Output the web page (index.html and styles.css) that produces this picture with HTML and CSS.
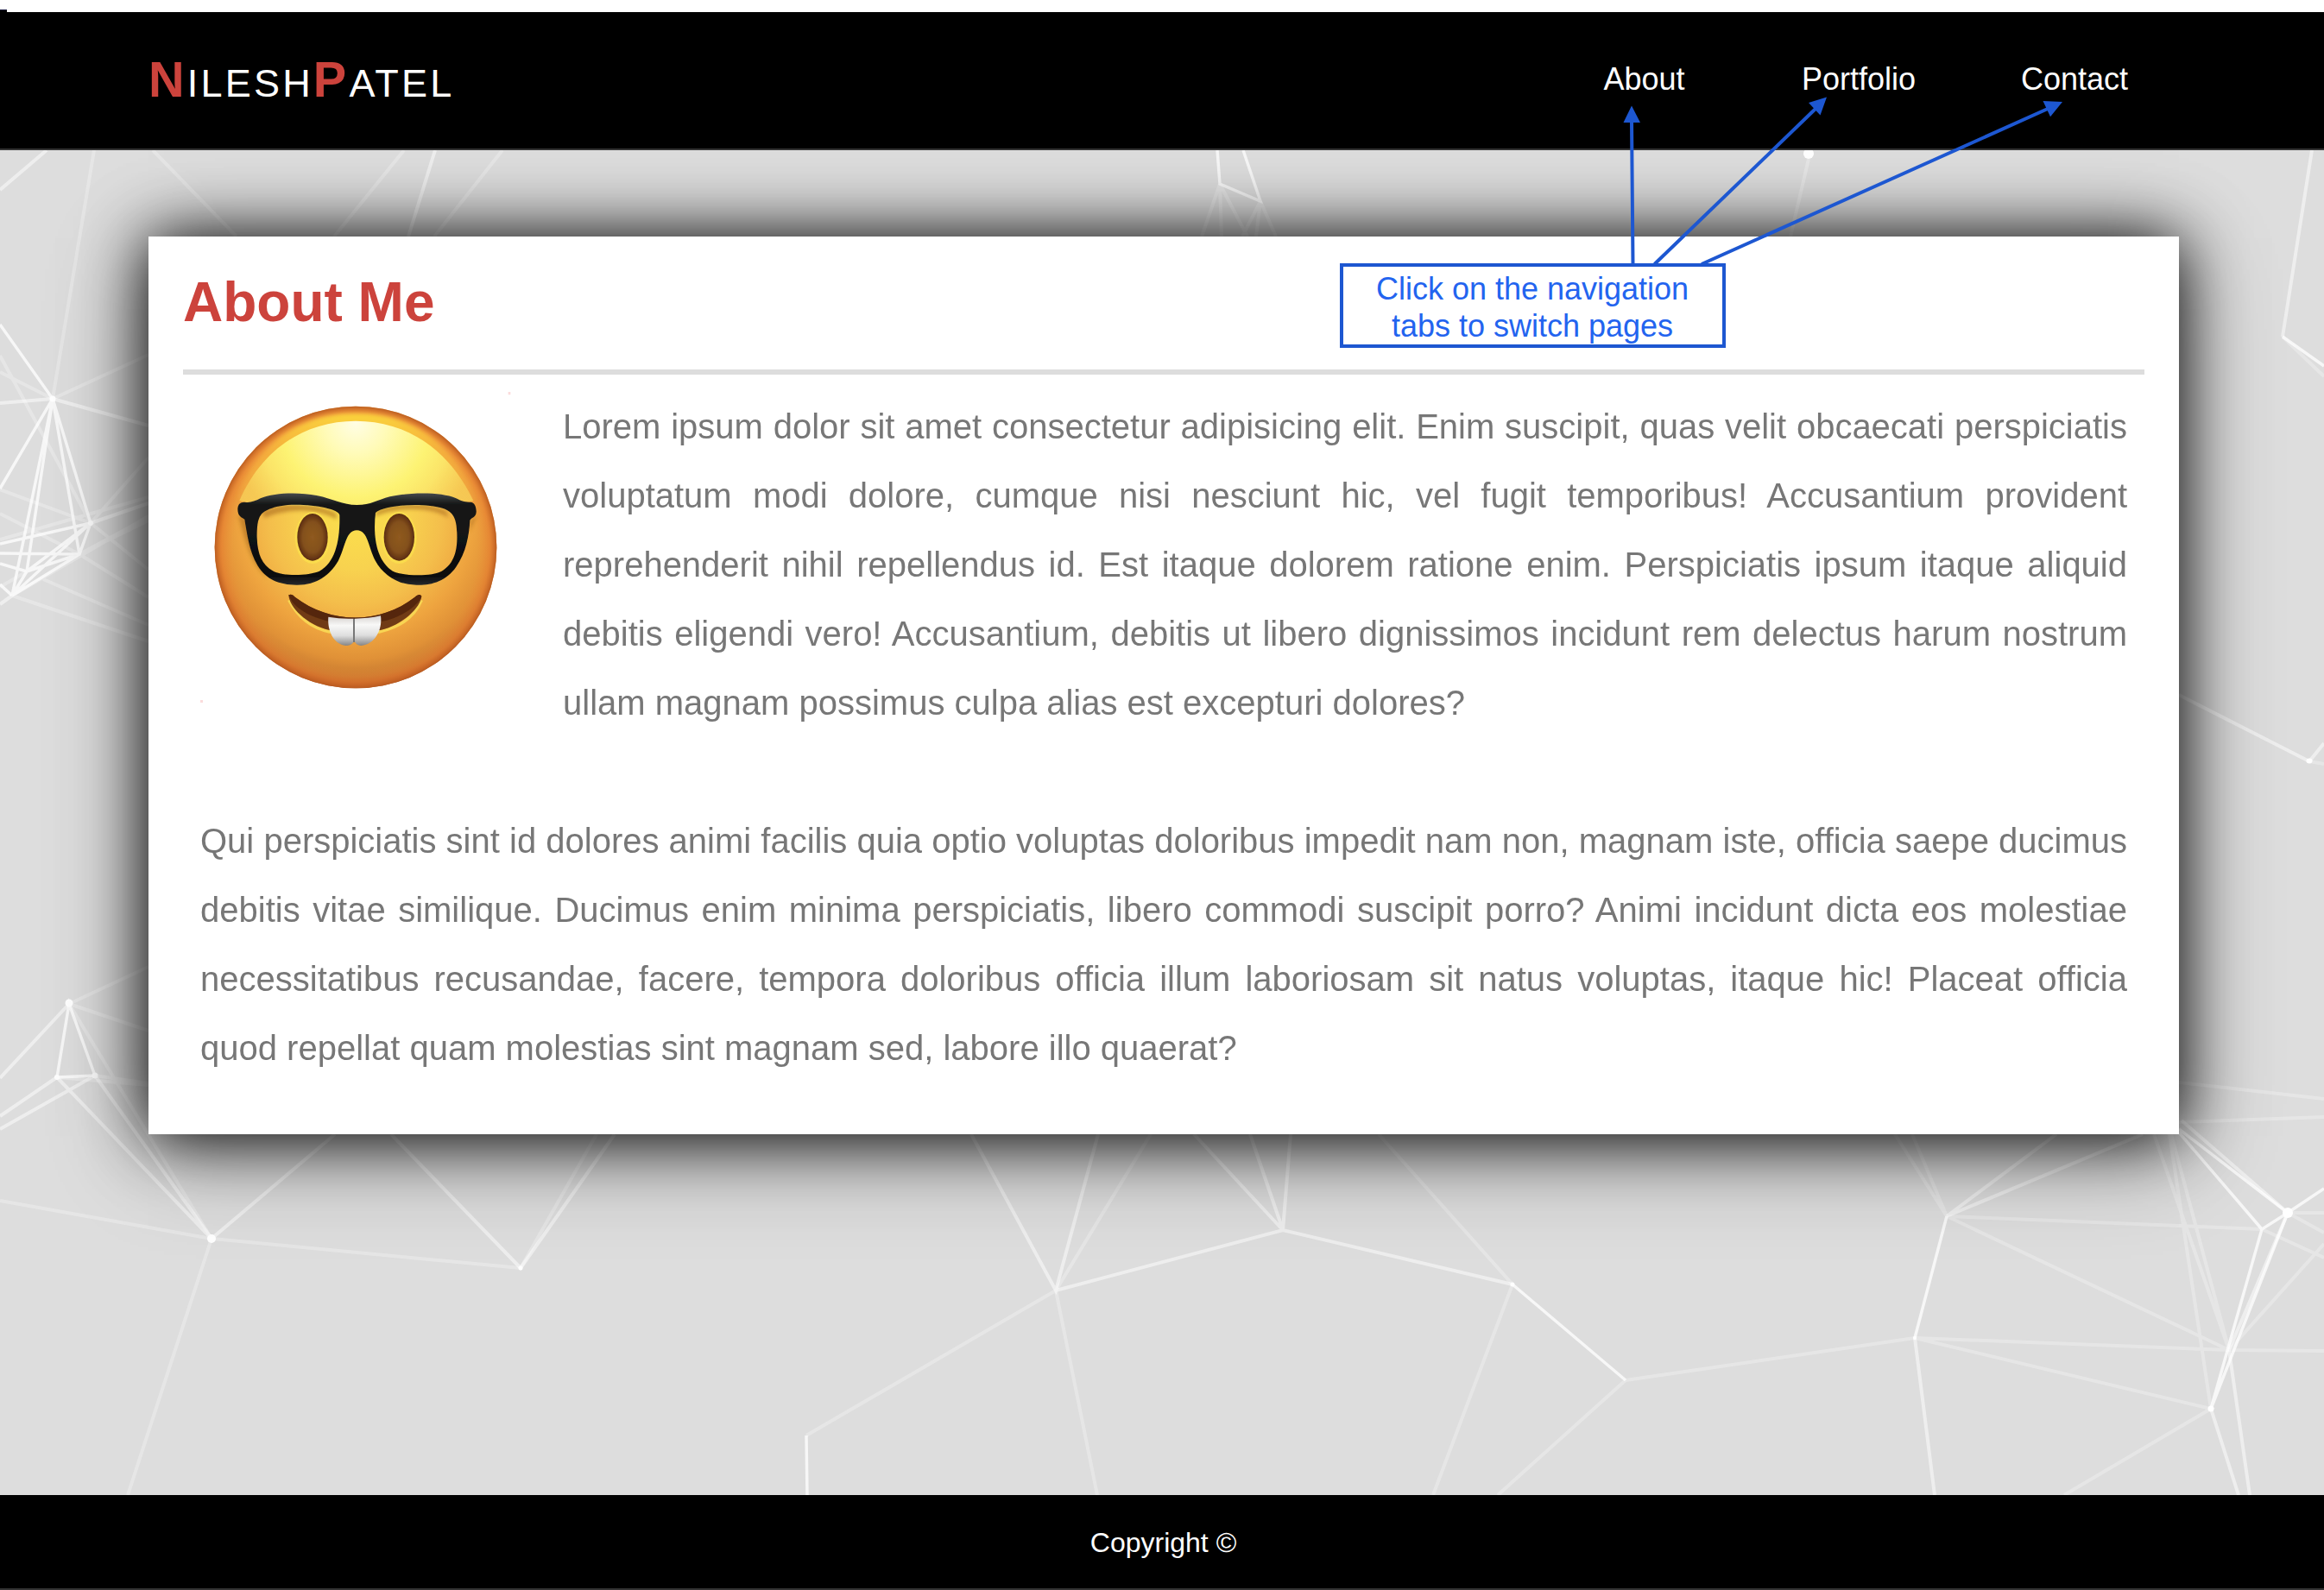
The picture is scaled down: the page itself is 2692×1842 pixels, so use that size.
FILE: index.html
```html
<!DOCTYPE html>
<html lang="en">
<head>
<meta charset="utf-8">
<title>Nilesh Patel</title>
<link rel="stylesheet" href="styles.css">
</head>
<body>
<span class="corner"></span>
<header class="header">
  <a class="logo"><span class="cap">N</span>ilesh<span class="cap">P</span>atel</a>
  <nav class="nav">
    <a>About</a>
    <a>Portfolio</a>
    <a>Contact</a>
  </nav>
</header>

<main class="main">
  <svg class="net" viewBox="0 174 2692 1558" preserveAspectRatio="none" fill="none" stroke="#fff" stroke-width="4">
    <g stroke-opacity=".28">
      <path d="M61 462L109 174M177 174L274 274M61 462L0 431M0 412L105 606M61 462L172 411M0 567L105 606L172 660M0 595L92 642L172 692M50 671L172 724M14 690L172 743M0 625L172 576M105 606L172 530M92 642L172 599M92 642L172 603M14 690L172 598M0 680L31 662"/>
      <path d="M468 174L387 274M582 174L503 274M1413 213L1392 274M1413 213L1415 274M1413 213L1445 274M1460 233L1439 274M1460 233L1455 274M1460 233L1478 274M2095 184L2074 274"/>
      <path d="M2644 390L2692 436M2675 882L2692 885M2524 1254L2692 1273M2524 1300L2692 1294"/>
      <path d="M80 1163L172 1120M80 1163L172 1194M110 1246L172 1255M66 1248L172 1257M0 1391L245 1435L603 1469M245 1435L148 1732M80 1163L245 1435M603 1469L691 1314"/>
      <path d="M1223 1495L1333 1314M1223 1495L934 1663M1223 1495L1271 1732M1597 1314L1752 1488L1660 1732M1883 1599L1735 1732M1883 1599L2218 1550"/>
      <path d="M2255 1409L2195 1314M2255 1409L2215 1314M2255 1409L2620 1424M2255 1409L2582 1564M2218 1550L2582 1564L2692 1565M2218 1550L2561 1632L2391 1732M2650 1405L2692 1405M2650 1405L2692 1428M2620 1424L2692 1457M2582 1564L2692 1441M2561 1632L2513 1314M2582 1564L2495 1314M2582 1564L2515 1314"/>
    </g>
    <g stroke-opacity=".5">
      <path d="M0 220L54 174M61 462L0 467M61 462L172 493M105 606L172 583M0 700L14 690M504 174L473 274M2678 174L2644 390M2675 882L2692 861M2524 805L2675 882"/>
      <path d="M0 1249L80 1163M66 1248L245 1435L388 1314M110 1246L245 1435M66 1248L0 1293M110 1246L0 1308M453 1314L603 1469L712 1314"/>
      <path d="M1125 1314L1223 1495L1272 1314M1223 1495L1486 1425L1752 1488M1486 1425L1383 1314M1486 1425L1448 1314M1486 1425L1495 1314"/>
      <path d="M2255 1409L2382 1314M2255 1409L2482 1314M2218 1550L2241 1732M2582 1564L2606 1732M2561 1632L2593 1732M2582 1564L2650 1405L2527 1298"/>
    </g>
    <g stroke-opacity=".75" stroke-width="3.5">
      <path d="M0 376L61 462L0 566M61 462L31 662M61 462L14 690M61 462L92 642M61 462L105 606M0 630L105 606M0 641L92 642M0 653L31 662M0 677L14 690M14 690L105 606M14 690L92 642M31 662L105 606M31 662L92 642L105 606M31 662L14 690"/>
      <path d="M1410 174L1413 213L1460 233L1440 174M2644 390L2692 424M66 1248L80 1163L110 1246L66 1248M934 1663L935 1732M1752 1488L1883 1599M2218 1550L2255 1409"/>
      <path d="M2561 1632L2620 1424L2650 1405L2692 1377M2561 1632L2650 1405L2524 1308M2620 1424L2524 1312"/>
    </g>
    <g fill="#fff" stroke="none">
      <circle cx="2095" cy="178" r="6"/><circle cx="61" cy="462" r="3.5"/><circle cx="105" cy="606" r="3"/>
      <circle cx="80" cy="1162" r="4.5"/><circle cx="66" cy="1248" r="3"/><circle cx="110" cy="1246" r="3.5"/>
      <circle cx="245" cy="1435" r="5"/><circle cx="603" cy="1469" r="2.5"/><ellipse cx="2675" cy="881.500" rx="3.500" ry="3"/>
      <circle cx="1752" cy="1488" r="2.500"/><circle cx="2218" cy="1550" r="2"/><circle cx="2650" cy="1405" r="6"/><circle cx="2561" cy="1632" r="3.500"/>
    </g>
  </svg>

  <article class="card">
    <h1 class="title">About Me</h1>
    <div class="copy">
      <svg class="avatar" viewBox="96 102 1080 1080">
        <defs>
          <radialGradient id="face" gradientUnits="userSpaceOnUse" cx="636" cy="540" r="600">
            <stop offset="0" stop-color="#fbe04c"/><stop offset=".3" stop-color="#f8d24f"/><stop offset=".5" stop-color="#f4be4b"/><stop offset=".68" stop-color="#eea43f"/><stop offset=".82" stop-color="#e09137"/><stop offset=".92" stop-color="#c87a30"/><stop offset="1" stop-color="#a94b1c"/>
          </radialGradient>
          <radialGradient id="rim" gradientUnits="userSpaceOnUse" cx="636" cy="642" r="490">
            <stop offset=".86" stop-color="#f2933a" stop-opacity="0"/><stop offset=".95" stop-color="#e8792f" stop-opacity=".5"/><stop offset="1" stop-color="#b95a1f" stop-opacity=".95"/>
          </radialGradient>
          <linearGradient id="top" x1="0" y1="0" x2="0" y2="1">
            <stop offset="0" stop-color="#fbd53c"/><stop offset=".45" stop-color="#f6b33c" stop-opacity=".75"/><stop offset="1" stop-color="#f6b33c" stop-opacity="0"/>
          </linearGradient>
          <radialGradient id="shine" gradientUnits="userSpaceOnUse" cx="636" cy="210" r="430">
            <stop offset="0" stop-color="#fffde4"/><stop offset=".25" stop-color="#fffbb8"/><stop offset=".6" stop-color="#fdf373"/><stop offset=".78" stop-color="#fbe468"/><stop offset="1" stop-color="#f7cf58" stop-opacity=".8"/>
          </radialGradient>
          <radialGradient id="eye"><stop offset="0" stop-color="#8f5a20"/><stop offset=".65" stop-color="#83501c"/><stop offset="1" stop-color="#5b2c10"/></radialGradient>
          <linearGradient id="tooth" x1="0" y1="0" x2="0" y2="1"><stop offset="0" stop-color="#d8d4d2"/><stop offset=".3" stop-color="#f8f8f7"/><stop offset=".65" stop-color="#dedede"/><stop offset="1" stop-color="#858585"/></linearGradient>
          <linearGradient id="frame" x1="0" y1="0" x2="0" y2="1"><stop offset="0" stop-color="#45474a"/><stop offset=".12" stop-color="#161718"/><stop offset=".9" stop-color="#0c0d0e"/><stop offset="1" stop-color="#26282b"/></linearGradient>
          <filter id="soft" x="-20%" y="-20%" width="140%" height="140%"><feGaussianBlur stdDeviation="7"/></filter>
          <filter id="edge"><feGaussianBlur stdDeviation="2"/></filter>
          <clipPath id="disc"><circle cx="636" cy="642" r="490"/></clipPath>
        </defs>
        <circle cx="636" cy="642" r="490" fill="url(#face)"/>
        <circle cx="636" cy="642" r="490" fill="url(#rim)"/>
        <g clip-path="url(#disc)">
          <path filter="url(#soft)" d="M215 480C300 270 450 178 636 178S970 270 1060 480Z" fill="url(#top)"/>
          <path filter="url(#edge)" d="M232 480C310 300 460 203 636 203S960 300 1045 480C960 500 800 500 636 500S320 500 232 480Z" fill="url(#shine)"/>
        </g>
        <path filter="url(#soft)" d="M225 530C245 560 250 680 330 750C290 680 262 600 262 545ZM320 540C400 505 500 505 570 545V525C500 485 370 485 310 520ZM705 535C780 500 900 500 960 540L950 515C880 485 760 485 705 520ZM1058 530L1030 590L1035 550Z" fill="#a8691b" opacity=".6"/>
        <g filter="url(#edge)">
          <ellipse cx="486" cy="609" rx="61" ry="90" fill="#fbe04d" opacity=".75"/><ellipse cx="787" cy="609" rx="61" ry="90" fill="#fbe04d" opacity=".75"/>
          <ellipse cx="486" cy="607" rx="53" ry="82" fill="url(#eye)"/><ellipse cx="787" cy="607" rx="53" ry="82" fill="url(#eye)"/>
          <path d="M404 826C440 895 490 925 545 936H720C780 920 835 895 865 826" fill="none" stroke="#f8d552" stroke-width="10"/>
          <path d="M403 808C412 804 418 808 425 815C550 910 720 910 842 815C852 806 860 804 865 812C862 850 800 912 722 930H545C465 912 405 850 403 808Z" fill="#6f3b13"/>
          <path d="M403 808C412 804 418 808 425 815C550 910 720 910 842 815C852 806 860 804 865 812C850 850 780 893 722 900H545C480 885 420 855 403 808Z" fill="#54260e"/>
          <path d="M541 884Q585 892 628 890V972Q620 984 602 984C558 978 537 930 541 884Z" fill="url(#tooth)"/>
          <path d="M633 890Q680 890 723 880C730 930 702 980 655 984Q637 982 633 970Z" fill="url(#tooth)"/>
          <path d="M630 890V972" stroke="#777" stroke-width="6"/>
        </g>
        <path filter="url(#edge)" fill="url(#frame)" fill-rule="evenodd" d="M226 510C226 492 236 484 250 485C270 488 285 482 305 472C350 452 440 450 500 462C560 474 590 495 640 495S710 478 755 466C820 452 930 448 985 472C1005 482 1015 486 1035 485C1050 485 1056 505 1055 520C1054 538 1040 538 1033 548C1030 600 1020 660 985 710C950 760 900 774 850 773C780 774 730 735 705 690C680 645 680 583 640 583S600 645 575 690C545 740 500 774 430 773C370 772 325 755 295 705C265 655 258 590 250 545C240 538 226 535 226 510ZM330 512C295 525 293 560 293 610C295 665 310 705 350 725C380 742 470 742 510 725C565 695 582 620 580 530C578 508 480 490 400 495C370 498 350 503 330 512ZM705 522C695 610 710 690 765 725C800 742 900 745 935 725C985 695 990 640 988 590C986 540 975 520 940 507C870 485 735 495 705 522Z"/>
        <path d="M96 1173h9v9h-9zM1166 102h8v10h-8z" fill="#fbdcdc"/>
      </svg>
      Lorem ipsum dolor sit amet consectetur adipisicing elit. Enim suscipit, quas velit obcaecati perspiciatis voluptatum modi dolore, cumque nisi nesciunt hic, vel fugit temporibus! Accusantium provident reprehenderit nihil repellendus id. Est itaque dolorem ratione enim. Perspiciatis ipsum itaque aliquid debitis eligendi vero! Accusantium, debitis ut libero dignissimos incidunt rem delectus harum nostrum ullam magnam possimus culpa alias est excepturi dolores?
      <br><br>
      Qui perspiciatis sint id dolores animi facilis quia optio voluptas doloribus impedit nam non, magnam iste, officia saepe ducimus debitis vitae similique. Ducimus enim minima perspiciatis, libero commodi suscipit porro? Animi incidunt dicta eos molestiae necessitatibus recusandae, facere, tempora doloribus officia illum laboriosam sit natus voluptas, itaque hic! Placeat officia quod repellat quam molestias sint magnam sed, labore illo quaerat?
    </div>
  </article>
</main>

<footer class="footer">Copyright &copy;</footer>

<!-- Hint pointing at the navigation -->
<svg class="arrows" viewBox="0 0 2692 420">
  <path d="M1891.500 306L1890 140M1916.500 306L2103 126M1971 306L2372 126" fill="none" stroke="#1d57d1" stroke-width="4"/>
  <path d="M1890 122.500L1900 142H1880.500ZM2116 112.500L2108.500 133.500L2095 119ZM2389 118L2375 135.300L2366.500 117Z" fill="#1d57d1"/>
</svg>
<div class="hint">Click on the navigation<br>tabs to switch pages</div>
</body>
</html>
```
FILE: styles.css
```css
* { box-sizing: border-box; }

body {
  position: relative;
  display: flex;
  flex-direction: column;
  width: 2692px;
  height: 1842px;
  margin: 0;
  padding-top: 14px;
  overflow: hidden;
  background: #fff;
  font-family: "Liberation Sans", Arial, Helvetica, sans-serif;
}

.corner {
  position: absolute;
  top: 11px;
  left: 0;
  width: 8px;
  height: 3px;
  background: #000;
  border-top: 1px solid #14143c;
}

.header {
  display: flex;
  justify-content: space-between;
  align-items: flex-start;
  height: 160px;
  padding: 0 164px 0 172px;
  background: #000;
  border-bottom: 2px solid #333;
  color: #fff;
}

.logo {
  padding-top: 39px;
  font-size: 64px;
  line-height: 74px;
  font-variant: small-caps;
  letter-spacing: 3.2px;
}

.cap {
  font-size: 57.6px;
  font-weight: bold;
  color: #cc433c;
}

.nav {
  display: grid;
  grid-template-columns: 247px 250px 250px;
  padding-top: 57px;
  font-size: 36px;
  line-height: 42px;
  text-align: center;
}

.main {
  position: relative;
  flex: 1;
  padding: 100px 168px 0 172px;
  background: #ddd;
  overflow: hidden;
}

.net {
  position: absolute;
  inset: 0;
  width: 100%;
  height: 100%;
}

.card {
  position: relative;
  height: 1040px;
  padding: 40px;
  background: #fff;
  box-shadow: 0 2px 72px #000, 0 20px 110px rgba(0, 0, 0, .3);
}

.title {
  height: 120px;
  margin: 0;
  border-bottom: 6px solid #ddd;
  color: #cc433c;
  font-size: 64px;
  line-height: 72px;
}

.copy {
  padding: 20px;
  color: #777;
  font-size: 40px;
  line-height: 80px;
  text-align: justify;
}

.avatar {
  float: left;
  width: 360px;
  height: 360px;
  margin-right: 60px;
}

.footer {
  height: 110px;
  padding: 37px 0 0 3px;
  background: #000;
  border-bottom: 2px solid #333;
  color: #fff;
  font-size: 32px;
  line-height: 37px;
  text-align: center;
}

.arrows {
  position: absolute;
  top: 0;
  left: 0;
  width: 2692px;
  height: 420px;
}

.hint {
  position: absolute;
  top: 305px;
  left: 1552px;
  width: 447px;
  height: 98px;
  padding: 4px 1px 0 0;
  border: 4px solid #1d57d1;
  background: #fff;
  color: #2364ef;
  font-size: 36px;
  line-height: 43px;
  text-align: center;
}
```
